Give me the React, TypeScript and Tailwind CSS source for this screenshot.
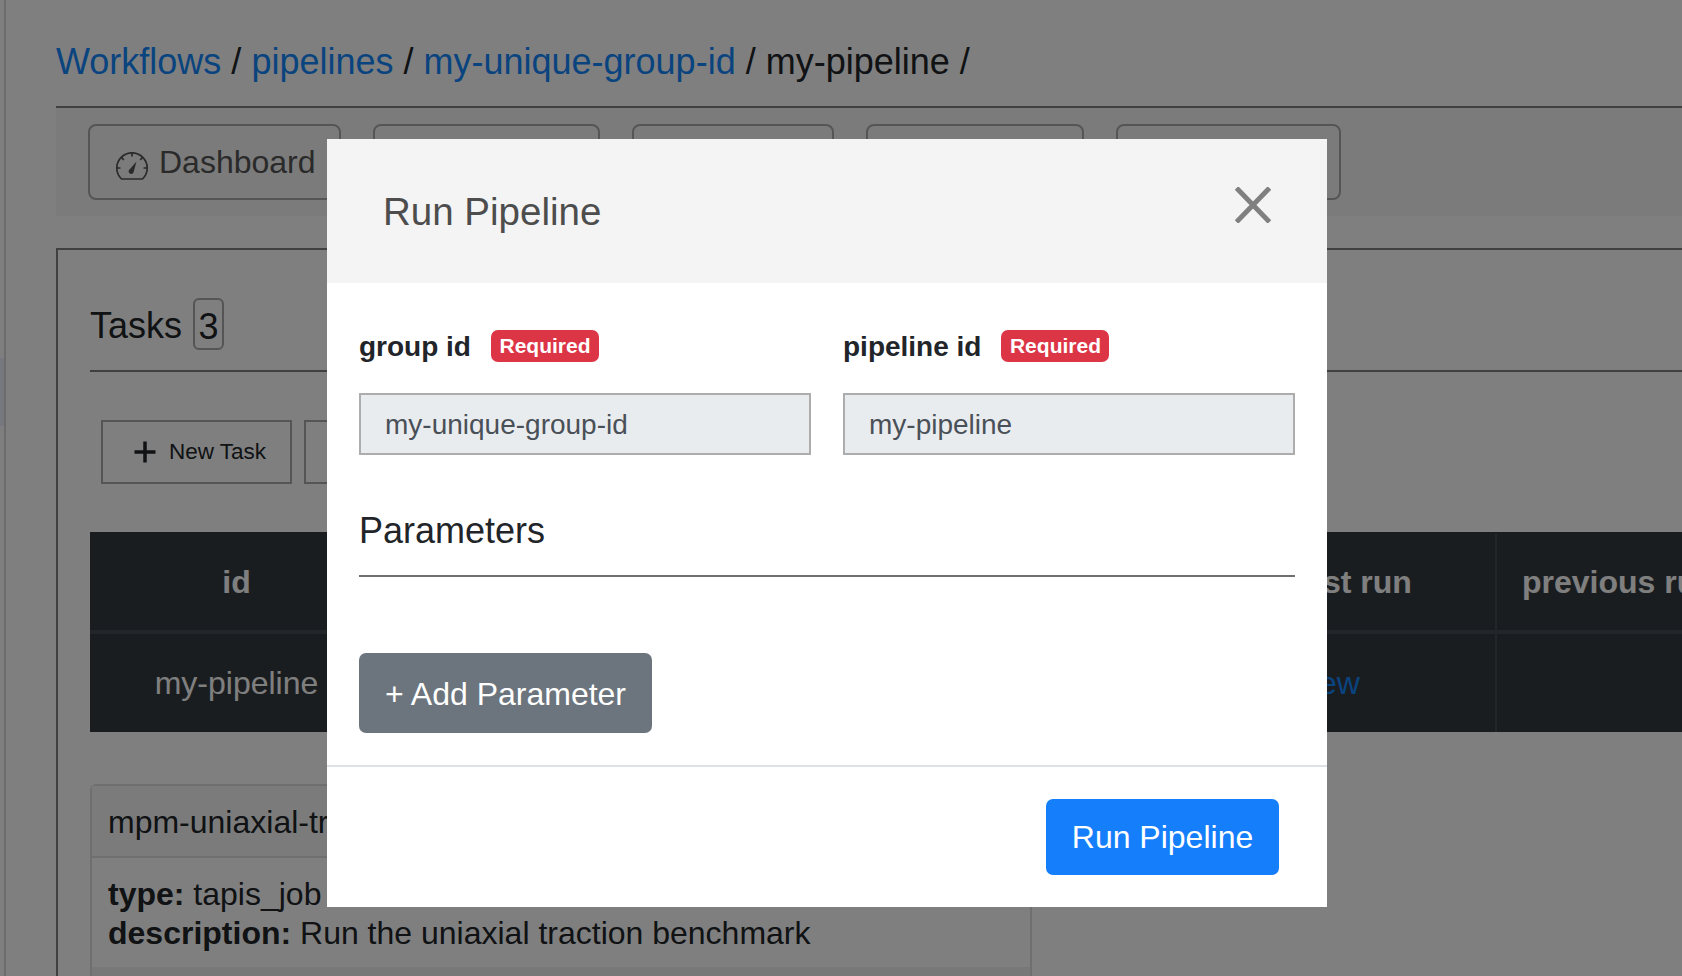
const font = "font-['Liberation_Sans',Arial,sans-serif]";

function GaugeIcon() {
  return (
    <svg className="mr-[11px] mt-[7px] shrink-0" width="32" height="28" viewBox="0 0 32 28" fill="none" stroke="currentColor" strokeWidth="1.7">
      <path d="M5.5 27 A15.2 15.2 0 1 1 26.5 27 Z" />
      <path d="M16 1 V4.5 M5.3 5.3 L7.8 7.8 M26.7 5.3 L24.2 7.8 M1 16 H4.5 M31 16 H27.5" />
      <path d="M20.5 9.5 L17.8 19.5 A2.6 2.6 0 1 1 14 17 Z" fill="currentColor" stroke="none" />
    </svg>
  );
}

function RequiredBadge() {
  return (
    <span className="flex h-8 w-[108px] items-center justify-center rounded-[7px] bg-[#dc3545] pb-[2px] text-[21px] font-bold leading-none text-white">
      Required
    </span>
  );
}

function ReadonlyField({ label, value, gap }: { label: string; value: string; gap: string }) {
  return (
    <div className="w-[452px]">
      <div className={`flex h-8 items-center ${gap}`}>
        <span className="pt-[2px] text-[28px] font-bold leading-none text-[#212529]">{label}</span>
        <RequiredBadge />
      </div>
      <div className="mt-[31px] flex h-[62px] items-center border-2 border-[#adadad] bg-[#e9ecef] pl-6 pt-[2px] text-[28px] text-[#495057]">
        {value}
      </div>
    </div>
  );
}

function RunPipelineModal() {
  return (
    <div className="absolute inset-0 bg-black/50 pl-[327px] pt-[139px]">
      <div className="h-[768px] w-[1000px] bg-white">
        <div className="relative flex h-[144px] items-center bg-[#f4f4f4] pl-14 pt-[2px]">
          <h5 className="text-[38.5px] leading-none text-[#4d4d4d]">Run Pipeline</h5>
          <svg className="absolute left-[908px] top-[48px]" width="36" height="36" viewBox="0 0 36 36" fill="none" stroke="#808080" strokeWidth="5">
            <path d="M1.5 1 L34.5 35 M34.5 1 L1.5 35" />
          </svg>
        </div>

        <div className="h-[484px] border-b-2 border-[#dee2e6] px-8 pt-[47px]">
          <div className="flex gap-8">
            <ReadonlyField label="group id" value="my-unique-group-id" gap="gap-5" />
            <ReadonlyField label="pipeline id" value="my-pipeline" gap="gap-5" />
          </div>
          <div className="mt-[50px] border-b-2 border-[#6f6f6f] pb-[18px] text-[36px] leading-[52px] text-[#212529]">
            Parameters
          </div>
          <button className="mt-[76px] flex h-20 w-[293px] items-center justify-center rounded-[7px] bg-[#6c757d] pt-[2px] text-[32px] text-white">
            + Add Parameter
          </button>
        </div>

        <div className="flex justify-end pr-12 pt-8">
          <button className="flex h-[76px] w-[233px] items-center justify-center rounded-[7px] bg-[#147efb] text-[32px] text-white">
            Run Pipeline
          </button>
        </div>
      </div>
    </div>
  );
}

function Tab({ width, children }: { width: string; children?: React.ReactNode }) {
  return (
    <div className={`flex h-[76px] items-center rounded-lg border-2 border-[#ababab] pl-[26px] text-[32px] text-[#555] ${width}`}>
      {children}
    </div>
  );
}

export default function App() {
  return (
    <div className={`relative h-[976px] overflow-hidden bg-white ${font}`}>
      <div className="absolute left-0 top-[358px] h-[68px] w-1 bg-[#eeeeff]" />
      <div className="ml-1 h-full border-l-2 border-[#d9d9d9] pl-[50px]">
        <div className="flex h-[106px] items-start pt-[38px] text-[36px] leading-[48px] text-[#212529]">
          <a className="text-[#1488ff]">Workflows</a>
          <span className="whitespace-pre"> / </span>
          <a className="text-[#1488ff]">pipelines</a>
          <span className="whitespace-pre"> / </span>
          <a className="text-[#1488ff]">my-unique-group-id</a>
          <span className="whitespace-pre"> / my-pipeline / </span>
        </div>

        <div className="flex h-[110px] gap-8 border-t-2 border-[#808080] bg-[#f7f7f7] pl-8 pt-4">
          <Tab width="w-[253px]">
            <GaugeIcon />
            Dashboard
          </Tab>
          <Tab width="w-[227px]" />
          <Tab width="w-[202px]" />
          <Tab width="w-[218px]" />
          <Tab width="w-[225px]" />
        </div>

        <div className="mt-8 border-l-2 border-t-2 border-[#808080] pl-8 pt-10">
          <div className="flex h-[82px] items-start border-b-2 border-[#808080] text-[36px] leading-[52px] text-[#212529]">
            <span className="mt-[10px]">Tasks</span>
            <span className="ml-[11px] mt-2 flex h-[52px] w-[31px] items-center justify-center rounded-md border-2 border-[#ababab] pt-[6px] leading-none">3</span>
          </div>

          <div className="mt-12 flex gap-3 pl-[11px]">
            <div className="flex h-16 w-[191px] items-center border-2 border-[#ababab] pl-[30px] text-[22.5px] text-[#212529]">
              <svg className="mr-3" width="24" height="24" viewBox="0 0 24 24" stroke="#212529" strokeWidth="3.5">
                <path d="M12 1.5 V22.5 M1.5 12 H22.5" />
              </svg>
              New Task
            </div>
            <div className="h-16 w-[100px] border-2 border-[#ababab]" />
          </div>

          <div className="mt-12 h-[200px] bg-[#343a40] text-[32px] text-white">
            <div className="grid h-[102px] grid-cols-[293px_830px_284px_1fr] items-center border-b-4 border-[#454d55] pt-[2px] font-bold">
              <span className="text-center">id</span>
              <span />
              <span className="flex h-full items-center justify-center border-r-2 border-[#454d55]">last run</span>
              <span className="whitespace-nowrap pl-[25px]">previous run</span>
            </div>
            <div className="grid h-[98px] grid-cols-[293px_830px_284px_1fr] items-center">
              <span className="text-center">my-pipeline</span>
              <span />
              <span className="flex h-full items-center border-r-2 border-[#454d55] pl-[78px] text-[#1488ff]">View</span>
              <span />
            </div>
          </div>

          <div className="mt-[52px] w-[942px] rounded-t-md border-2 border-[#dfdfdf] text-[32px] text-[#212529]">
            <div className="h-[72px] border-b-2 border-[#dfdfdf] bg-[#f7f7f7] pl-4 pt-4 leading-[40px]">mpm-uniaxial-traction</div>
            <div className="h-[109px] pl-4 pt-[17px] leading-[38.5px]">
              <div><b>type:</b> tapis_job</div>
              <div><b>description:</b> Run the uniaxial traction benchmark</div>
            </div>
            <div className="h-20 bg-[#f0f0f0]" />
          </div>
        </div>
      </div>
      <RunPipelineModal />
    </div>
  );
}
